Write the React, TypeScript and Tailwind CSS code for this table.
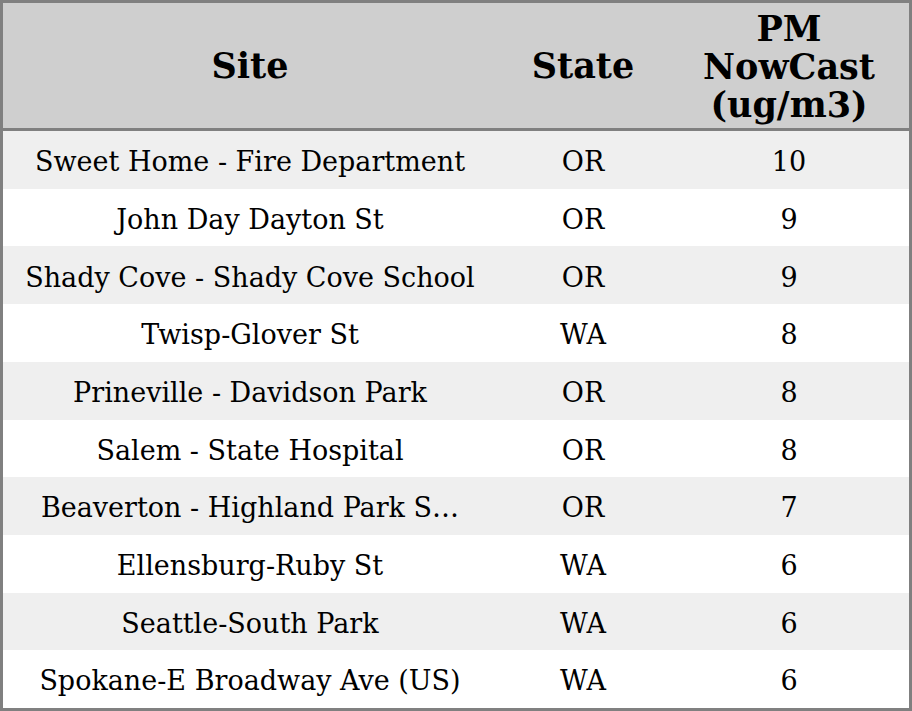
const rows: [string, string, string][] = [
  ['Sweet Home - Fire Department', 'OR', '10'],
  ['John Day Dayton St', 'OR', '9'],
  ['Shady Cove - Shady Cove School', 'OR', '9'],
  ['Twisp-Glover St', 'WA', '8'],
  ['Prineville - Davidson Park', 'OR', '8'],
  ['Salem - State Hospital', 'OR', '8'],
  ['Beaverton - Highland Park School', 'OR', '7'],
  ['Ellensburg-Ruby St', 'WA', '6'],
  ['Seattle-South Park', 'WA', '6'],
  ['Spokane-E Broadway Ave (US)', 'WA', '6'],
];

// long site names get cut by character count
const shorten = (s: string) => (s.length > 30 ? s.slice(0, 27) + '…' : s);

export default function App() {
  return (
    <div className="w-[912px] h-[711px] border-[3px] border-[#808080] bg-white flex flex-col font-['DejaVu_Serif',serif] text-black">
      {/* header */}
      <div className="h-[128px] shrink-0 bg-[#cfcfcf] border-b-[3px] border-[#808080] grid grid-cols-[494px_172px_1fr] items-center text-center font-bold text-[35px] leading-[38px]">
        <div>Site</div>
        <div>State</div>
        <div className="pt-[3px]">
          PM
          <br />
          NowCast
          <br />
          (ug/m3)
        </div>
      </div>

      {/* rows */}
      <div className="flex-1 flex flex-col">
        {rows.map(([site, state, value], i) => (
          <div
            key={site}
            className={`flex-1 grid grid-cols-[494px_172px_1fr] items-center text-center text-[27px] pt-[5px] ${
              i % 2 === 0 ? 'bg-[#efefef]' : 'bg-white'
            }`}
          >
            <div className="whitespace-nowrap">{shorten(site)}</div>
            <div>{state}</div>
            <div>{value}</div>
          </div>
        ))}
      </div>
    </div>
  );
}
